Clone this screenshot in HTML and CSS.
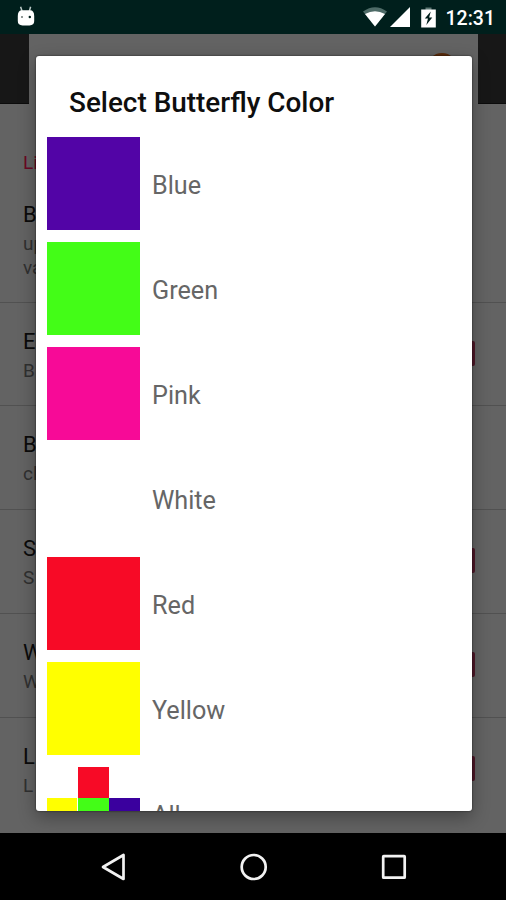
FILE: index.html
```html
<!DOCTYPE html>
<html lang="en">

<head>
    <meta charset="UTF-8">
    <meta name="viewport" content="width=device-width, initial-scale=1.0">
    <title>Select Butterfly Color</title>
    <link rel="stylesheet" href="styles.css">
</head>

<body>
    <div class="status-bar">
        <svg class="debug-icon" width="18" height="20" viewBox="0 0 18 20">
            <path d="M3.6 0.8L5 5M13.6 0.8L12.4 5" stroke="#bccbc8" stroke-width="1.5" />
            <path d="M0.8 10Q0.8 4.2 5 4.2H13Q17.2 4.2 17.2 10V15Q17.2 19.4 12.5 19.4H5.5Q0.8 19.4 0.8 15Z" fill="#fff" />
            <circle cx="5" cy="11" r="1" fill="#6d7775" />
            <circle cx="12.8" cy="11" r="1.2" fill="#001f1c" />
        </svg>
        <svg class="status-icons" width="75" height="22" viewBox="0 0 75 22">
            <path d="M0 4.5Q12 -4 24 4.5L12 19.5Z" fill="#4e6b67" />
            <path d="M2 7Q12 1.5 22 7L12 19.5Z" fill="#fff" />
            <path d="M47 0V20H27Z" fill="#fff" />
            <path d="M62.5 0.5H68.5V3H62.5Z" fill="#5d7773" />
            <path d="M58.2 2.5H72.8V20.5H58.2Z" fill="#fff" />
            <path d="M67.8 4.5L61.8 11.6H65L63.3 18L69.3 10.5H66.1Z" fill="#001f1c" />
        </svg>
        <span class="clock">12:31</span>
    </div>

    <div class="screen">
        <div class="banner">
            <div class="ad"><div class="ad-logo"></div></div>
        </div>
        <div class="category">Li</div>
        <div class="setting first">
            <div class="name">Ba</div>
            <div class="summary">up<br>va</div>
        </div>
        <div class="setting">
            <div class="name">E</div>
            <div class="summary">B</div>
            <div class="checkbox"></div>
        </div>
        <div class="setting">
            <div class="name">B</div>
            <div class="summary">cl</div>
        </div>
        <div class="setting">
            <div class="name">S</div>
            <div class="summary">S</div>
            <div class="checkbox"></div>
        </div>
        <div class="setting">
            <div class="name">W</div>
            <div class="summary">W</div>
            <div class="checkbox"></div>
        </div>
        <div class="setting last">
            <div class="name">L</div>
            <div class="summary">L</div>
            <div class="checkbox"></div>
        </div>
    </div>

    <div class="nav-bar">
        <svg width="28" height="30" viewBox="0 0 28 30">
            <path d="M23.5 3V27L3 15Z" fill="none" stroke="#f2f2f2" stroke-width="2.7" stroke-linejoin="round" />
        </svg>
        <svg width="28" height="30" viewBox="0 0 28 30">
            <circle cx="13.7" cy="15" r="12" fill="none" stroke="#f2f2f2" stroke-width="2.7" />
        </svg>
        <svg width="28" height="30" viewBox="0 0 28 30">
            <rect x="3.2" y="4.2" width="21.5" height="21.5" rx="0.5" fill="none" stroke="#f2f2f2" stroke-width="2.7" />
        </svg>
    </div>

    <!-- color picker -->
    <div class="dialog">
        <h1 class="dialog-title">Select Butterfly Color</h1>
        <div class="colors">
            <div class="color"><div class="swatch blue"></div><span>Blue</span></div>
            <div class="color"><div class="swatch green"></div><span>Green</span></div>
            <div class="color"><div class="swatch pink"></div><span>Pink</span></div>
            <div class="color"><div class="swatch white"></div><span>White</span></div>
            <div class="color"><div class="swatch red"></div><span>Red</span></div>
            <div class="color"><div class="swatch yellow"></div><span>Yellow</span></div>
            <div class="color">
                <div class="swatch all">
                    <i></i><i class="red"></i><i></i>
                    <i class="yellow"></i><i class="green"></i><i class="indigo"></i>
                </div>
                <span>All</span>
            </div>
        </div>
    </div>
</body>

</html>
```

FILE: styles.css
```css
* {
    margin: 0;
    padding: 0;
    box-sizing: border-box;
}

body {
    position: relative;
    width: 506px;
    height: 900px;
    overflow: hidden;
    background-color: #000;
    font-family: Roboto, "Liberation Sans", sans-serif;
}

.status-bar {
    display: flex;
    align-items: flex-start;
    height: 34px;
    padding: 6px 11px 0 17px;
    background-color: #001f1c;
}

.status-icons {
    margin: 1px 8px 0 auto;
}

.clock {
    color: #fff;
    font-size: 19.5px;
    font-weight: 500;
    line-height: 25px;
}

.screen {
    height: 799px;
    background-color: #636363;
    overflow: hidden;
}

.banner {
    height: 70px;
    padding: 0 28px 0 29px;
    background-color: #171717;
    border-bottom: 1px solid #0c0c0c;
}

.ad {
    height: 70px;
    background-color: #636363;
    display: flex;
    justify-content: flex-end;
    padding: 19px 21px 0 0;
}

.ad-logo {
    width: 30px;
    height: 30px;
    border-radius: 50%;
    background-color: #5a2c0c;
}

.category {
    height: 83px;
    padding: 47px 0 0 23px;
    color: #6a0824;
    font-size: 19px;
    line-height: 24px;
}

.setting {
    position: relative;
    height: 103.75px;
    padding: 25px 0 0 23px;
    border-bottom: 1px solid #515151;
}

.setting.first {
    height: 115.5px;
    padding-top: 14px;
}

.setting.last {
    border-bottom: none;
}

.name {
    color: #0b0b0b;
    font-size: 22px;
    line-height: 28px;
}

.summary {
    padding-top: 3px;
    color: #303030;
    font-size: 19px;
    line-height: 24px;
}

.checkbox {
    position: absolute;
    top: 38px;
    right: 31px;
    width: 24px;
    height: 25px;
    border-radius: 2px;
    background-color: #4e1728;
}

.nav-bar {
    display: flex;
    justify-content: center;
    gap: 112px;
    height: 67px;
    padding: 19px 0 0 1px;
    background-color: #000;
}

/* sits over the dimmed settings list */
.dialog {
    position: absolute;
    top: 56px;
    left: 36px;
    width: 436px;
    height: 755px;
    overflow: hidden;
    background-color: #fff;
    border-radius: 3px;
    box-shadow: 0 0 2px rgba(0, 0, 0, 0.7), 0 6px 18px rgba(0, 0, 0, 0.33);
}

.dialog-title {
    height: 81px;
    padding: 31px 0 0 33px;
    color: #0e0e0e;
    font-size: 27.9px;
    font-weight: 500;
    line-height: 32px;
    white-space: nowrap;
}

.colors {
    display: flex;
    flex-direction: column;
    gap: 12px;
    padding-left: 11px;
}

.color {
    display: flex;
    align-items: center;
    gap: 12px;
    color: #666;
    font-size: 25.2px;
    line-height: 30px;
}

.color span {
    padding-top: 4px;
}

.swatch {
    width: 93px;
    height: 93px;
}

.blue {
    background-color: #5204a6;
}

.green {
    background-color: #43fd17;
}

.pink {
    background-color: #f70a97;
}

.white {
    background-color: #fff;
}

.red {
    background-color: #f70a26;
}

.yellow {
    background-color: #ffff00;
}

.indigo {
    background-color: #3a009e;
}

.all {
    display: grid;
    grid-template-columns: 30px 31px 31px;
    grid-template-rows: 31px 31px;
    column-gap: 0.5px;
}
```
